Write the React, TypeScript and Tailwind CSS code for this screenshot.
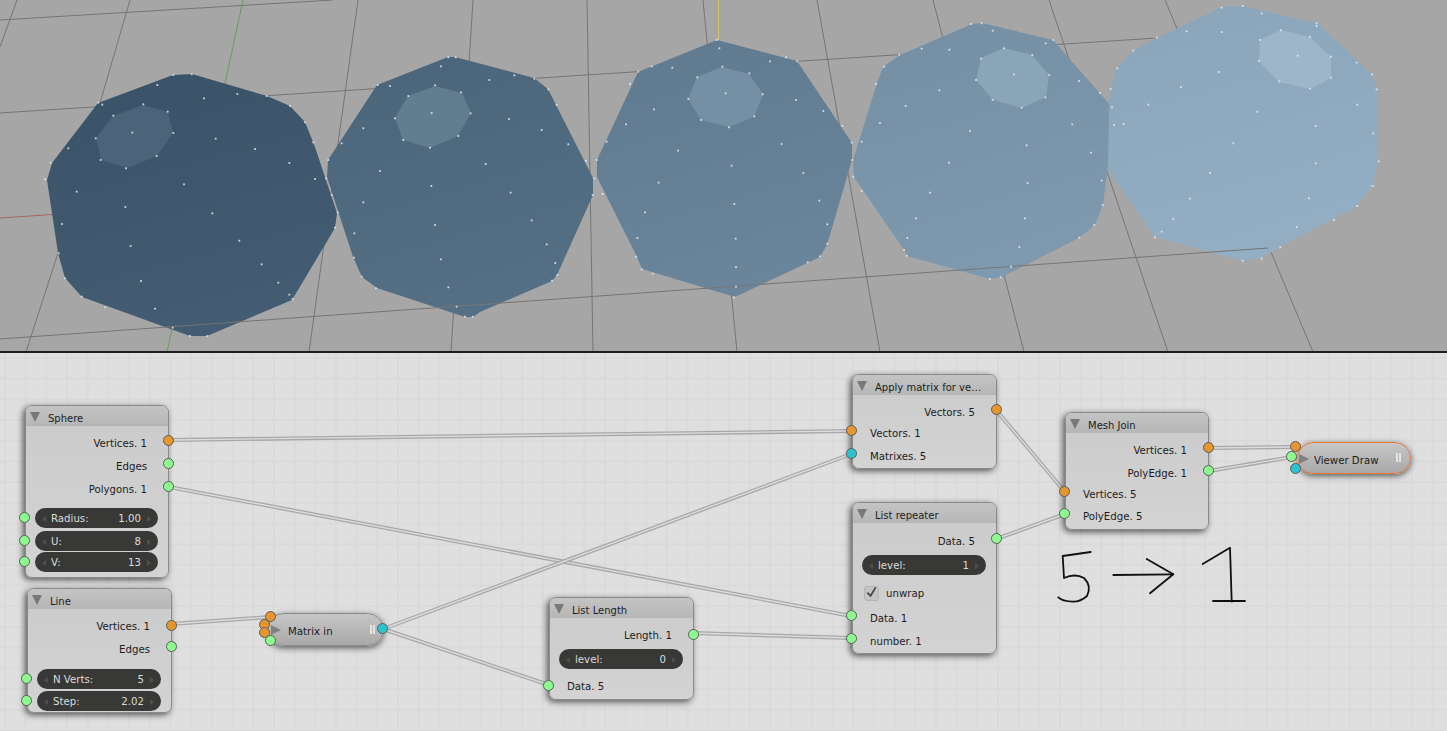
import type { ReactNode } from 'react';

type Pt = [number, number];

// outline + top cap of each sphere, page coordinates
const spheres: { outline: Pt[]; cap: Pt[]; top: string; bottom: string; capColor: string }[] = [
  {
    outline: [[173, 75], [192, 74], [267, 96], [290, 106], [305, 122], [315, 147], [337, 213], [335, 228], [292, 300], [207, 336], [190, 336], [165, 327], [82, 297], [65, 278], [58, 253], [47, 180], [52, 163], [98, 103]],
    cap: [[143, 105], [168, 112], [173, 133], [157, 156], [127, 168], [101, 160], [96, 138], [113, 116]],
    top: '#3a5368', bottom: '#445d72', capColor: '#4b6479',
  },
  {
    outline: [[448, 57], [455, 57], [534, 78], [548, 89], [593, 178], [593, 195], [557, 275], [552, 281], [480, 312], [473, 317], [465, 317], [377, 288], [362, 277], [353, 257], [327, 177], [328, 160], [377, 85]],
    cap: [[435, 86], [462, 93], [471, 113], [458, 136], [430, 148], [403, 140], [395, 118], [408, 96]],
    top: '#4b667b', bottom: '#557085', capColor: '#627c90',
  },
  {
    outline: [[717, 40], [797, 61], [852, 143], [852, 160], [827, 245], [820, 257], [735, 297], [642, 269], [637, 257], [597, 177], [597, 160], [638, 72]],
    cap: [[722, 67], [749, 74], [763, 94], [754, 117], [729, 127], [701, 120], [688, 99], [697, 77]],
    top: '#607a8f', bottom: '#6b859a', capColor: '#7590a4',
  },
  {
    outline: [[972, 24], [982, 23], [1053, 40], [1112, 107], [1113, 125], [1103, 205], [1095, 225], [1079, 238], [1002, 277], [990, 279], [907, 256], [904, 250], [854, 177], [853, 160], [877, 83], [883, 67], [900, 55]],
    cap: [[1004, 48], [1032, 55], [1049, 75], [1046, 97], [1022, 108], [993, 100], [976, 80], [981, 58]],
    top: '#7590a5', bottom: '#7f9aaf', capColor: '#8aa4b8',
  },
  {
    outline: [[1222, 7], [1243, 6], [1317, 23], [1372, 74], [1377, 89], [1378, 162], [1373, 186], [1357, 206], [1280, 247], [1262, 258], [1243, 261], [1155, 237], [1108, 170], [1109, 107], [1111, 88], [1117, 68], [1133, 51], [1157, 38]],
    cap: [[1281, 30], [1310, 37], [1331, 57], [1331, 78], [1310, 89], [1279, 82], [1259, 61], [1260, 40]],
    top: '#8ba6ba', bottom: '#94afc3', capColor: '#9db6ca',
  },
];

// vertex dots read off 3x crops: [crop x offset, points]
const dotCrops: [number, Pt[]][] = [
  [0, [[520, 225], [575, 223], [472, 255], [612, 295], [712, 282], [800, 288], [870, 318], [915, 367], [940, 427], [945, 537], [868, 489], [765, 447], [647, 416], [552, 553], [230, 575], [376, 621], [637, 640], [186, 672], [392, 738], [718, 722], [176, 760], [785, 793], [835, 848], [195, 835], [423, 843], [245, 890], [868, 884], [878, 897], [316, 922], [465, 926], [518, 983], [570, 1008], [622, 1008], [307, 314], [295, 308], [205, 445], [152, 488], [135, 538], [430, 313], [503, 335], [340, 347], [397, 398], [520, 399], [287, 415], [302, 480], [378, 505], [470, 468], [985, 480], [978, 535], [995, 585], [1013, 637], [1005, 683],
    [1345, 172], [1367, 172], [1323, 199], [1133, 255], [1170, 258], [1305, 256], [1383, 277], [1225, 288], [1295, 339], [1185, 355], [1412, 340], [1090, 385], [1375, 408], [1210, 420], [1025, 430], [1290, 443], [1140, 513], [1294, 558], [1090, 607], [1305, 675], [1063, 700], [1062, 773], [1323, 778], [1085, 830], [1128, 865], [1345, 862], [1370, 920], [1395, 950], [1418, 950]]],
  [480, [[28, 240], [103, 226], [163, 236], [205, 268], [230, 315], [87, 357], [185, 390], [265, 433], [17, 492], [318, 482], [343, 535], [92, 578], [338, 585], [155, 661], [200, 733], [226, 789], [232, 825], [216, 842],
    [710, 120], [718, 145], [870, 184], [918, 172], [952, 184], [515, 199], [577, 203], [475, 215], [727, 200], [652, 232], [808, 220], [450, 252], [737, 280], [848, 283], [625, 297], [948, 300], [522, 328], [1030, 333], [823, 349], [663, 360], [747, 382], [438, 373], [1087, 378], [380, 425], [905, 432], [1115, 428], [594, 452], [755, 497], [350, 480], [1117, 480], [970, 519], [536, 548], [368, 582], [1018, 602], [763, 612], [495, 637], [1042, 673], [472, 714], [767, 716], [1042, 731], [468, 770], [1020, 769], [983, 787], [768, 801], [485, 808], [518, 821], [768, 860], [762, 892],
    [1258, 164], [1325, 146], [1408, 149], [1212, 200], [1188, 252], [1378, 271], [1277, 318], [1200, 369], [1145, 425], [1407, 488], [1120, 530], [1145, 573], [1350, 578], [1308, 655], [1282, 714], [1272, 750], [1280, 767]]],
  [960, [[33, 72], [65, 70], [98, 92], [280, 120], [257, 130], [132, 145], [217, 165], [63, 176], [162, 223], [268, 225], [48, 240], [357, 243], [420, 279], [256, 292], [98, 300], [185, 323], [456, 322], [462, 375], [337, 373], [30, 393], [200, 436], [393, 458], [203, 549], [425, 542], [428, 615], [195, 655], [403, 675], [358, 713], [178, 741], [153, 800], [122, 832], [90, 837],
    [785, 23], [848, 18], [905, 40], [1070, 70], [1070, 78], [680, 94], [785, 96], [963, 91], [1050, 110], [900, 120], [520, 152], [590, 113], [1113, 170], [1013, 167], [897, 183], [1190, 188], [472, 205], [777, 216], [1236, 223], [1113, 233], [958, 244], [663, 261], [1050, 266], [452, 267], [1250, 268], [565, 314], [1192, 314], [491, 372], [892, 335], [1067, 378], [1240, 400], [820, 430], [1067, 490], [1256, 484], [750, 519], [1238, 558], [690, 596], [1047, 595], [1192, 618], [640, 657], [1122, 660], [1010, 681], [605, 695], [585, 712], [961, 742], [905, 776], [848, 782]]],
];

const floorLines: [number, number, number, number][] = [
  [0, 20, 333, 0],
  [0, 113, 1157, 38],
  [17, 0, 0, 47],
  [26, 352, 58, 253],
  [130, 0, 100, 103],
  [358, 0, 309, 352],
  [473, 0, 451, 352],
  [587, 0, 593, 352],
  [703, 0, 737, 352],
  [817, 0, 880, 352],
  [933, 0, 1024, 352],
  [1049, 0, 1168, 352],
  [1165, 0, 1313, 352],
];

const wires: [number, number, number, number][] = [
  [169, 440, 851, 431],
  [169, 487, 851, 616],
  [693, 633, 851, 638],
  [171, 624, 270, 617],
  [383, 629, 851, 454],
  [383, 629, 549, 685],
  [996, 410, 1065, 492],
  [996, 539, 1065, 514],
  [1209, 448, 1296, 447],
  [1209, 471, 1292, 457],
];

const toPoints = (pts: Pt[]) => pts.map((p) => p.join(',')).join(' ');

function Viewport() {
  return (
    <div className="h-[353px] shrink-0 border-b-2 border-[#1c1c1c] bg-[#a6a6a6]">
      <svg viewBox="0 0 1447 351" className="block h-[351px] w-[1447px]">
        <defs>
          {spheres.map((s, i) => (
            <linearGradient key={i} id={`shade${i}`} x1="0.3" y1="0" x2="0.6" y2="1">
              <stop offset="0" stopColor={s.top} />
              <stop offset="1" stopColor={s.bottom} />
            </linearGradient>
          ))}
        </defs>
        {floorLines.map(([x1, y1, x2, y2], i) => (
          <line key={i} x1={x1} y1={y1} x2={x2} y2={y2} stroke="#757575" strokeWidth="1" />
        ))}
        <line x1="0" y1="218" x2="60" y2="214" stroke="#a3675f" strokeWidth="1" />
        <line x1="243" y1="0" x2="167" y2="352" stroke="#6b9a5c" strokeWidth="1" />
        <line x1="718.5" y1="0" x2="718.5" y2="40" stroke="#d4c468" strokeWidth="1" />
        {spheres.map((s, i) => (
          <g key={i}>
            <polygon points={toPoints(s.outline)} fill={`url(#shade${i})`} />
            <polygon points={toPoints(s.cap)} fill={s.capColor} />
          </g>
        ))}
        <line x1="0" y1="339" x2="1268" y2="248" stroke="#757575" strokeWidth="1" />
        {dotCrops.map(([ox, pts]) =>
          pts.map(([x, y], i) => (
            <rect key={`${ox}-${i}`} x={ox + x / 3 - 0.9} y={y / 3 - 0.9} width="1.8" height="1.8" fill="#e2eefa" fillOpacity="0.85" />
          )),
        )}
      </svg>
    </div>
  );
}

type SocketColor = 'orange' | 'green' | 'cyan';

function Socket({ color, className }: { color: SocketColor; className: string }) {
  const fill = color === 'orange' ? 'bg-[#e6962e]' : color === 'green' ? 'bg-[#8dfb8d]' : 'bg-[#2cc4cc]';
  return <span className={`absolute z-10 size-[11px] rounded-full border border-[#5c5c5c] ${fill} ${className}`} />;
}

function Row({ label, color, side, className, socketTop = 'top-[5px]' }: { label: string; color: SocketColor; side: 'in' | 'out'; className?: string; socketTop?: string }) {
  return (
    <div className={`relative flex h-[23px] items-center ${side === 'out' ? 'justify-end pr-[21px]' : 'pl-[17px]'} ${className ?? ''}`}>
      <span className="pt-[5px]">{label}</span>
      <Socket color={color} className={`${socketTop} ${side === 'out' ? '-right-[6px]' : '-left-[7px]'}`} />
    </div>
  );
}

function Field({ label, value, socket, className }: { label: string; value: string; socket?: boolean; className?: string }) {
  return (
    <div className={`relative h-[20px] ${className ?? ''}`}>
      {socket && <Socket color="green" className="top-[4px] -left-[7px]" />}
      <div className="ml-[9px] mr-[10px] flex h-full items-center justify-between rounded-full bg-[#383836] pl-[16px] pr-[17px] pt-[3px] text-[#dcdcdc]">
        <svg viewBox="0 0 4 6" className="absolute left-[16px] top-[8px] h-[6px] w-[4px]"><polygon points="4,0 0,3 4,6" fill="#4f4f4d" /></svg>
        <span>{label}</span>
        <span>{value}</span>
        <svg viewBox="0 0 4 6" className="absolute right-[17px] top-[8px] h-[6px] w-[4px]"><polygon points="0,0 4,3 0,6" fill="#4f4f4d" /></svg>
      </div>
    </div>
  );
}

function Node({ title, className, children }: { title: string; className: string; children: ReactNode }) {
  return (
    <div className={`absolute z-10 rounded-[7px] border border-[#8a8a8a] bg-gradient-to-b from-[#cbcbcb] to-[#d3d3d3] shadow-[-2px_2px_6px_rgba(0,0,0,0.62)] ${className}`}>
      <div className="flex h-[20px] items-center gap-[8px] rounded-t-[6px] bg-gradient-to-b from-[#c4c4c4] to-[#b6b6b6] pl-[4px]">
        <svg viewBox="0 0 10 10" className="mt-[1px] size-[10px]"><polygon points="0,0 10,0 5,10" fill="#787878" /></svg>
        <span className="truncate pt-[5px] text-[10px]">{title}</span>
      </div>
      {children}
    </div>
  );
}

function CollapsedNode({ title, outlined, className, pauseClass, textClass }: { title: string; outlined?: boolean; className: string; pauseClass: string; textClass: string }) {
  return (
    <div className={`absolute z-10 flex items-center rounded-full bg-gradient-to-b from-[#c6c6c6] to-[#a9a9a9] shadow-[0_2px_6px_rgba(0,0,0,0.6)] ${outlined ? 'border border-[#e8763a] pl-[1px]' : 'border border-[#8a8a8a] pl-[3px]'} ${className}`}>
      <svg viewBox="0 0 10 10" className="mt-[1px] size-[10px]"><polygon points="0,0 10,5 0,10" fill="#808080" /></svg>
      <span className={`pt-[5px] ${textClass}`}>{title}</span>
      <span className={`absolute flex gap-[1px] ${pauseClass}`}>
        <span className="h-[9px] w-[2px] bg-[#e4e4e4]" />
        <span className="h-[9px] w-[2px] bg-[#e4e4e4]" />
      </span>
    </div>
  );
}

function NodeEditor() {
  return (
    <div className="relative flex-1 overflow-hidden bg-[#dfdfdf] bg-[linear-gradient(to_right,#dadada_2px,transparent_2px),linear-gradient(to_bottom,#dadada_2px,transparent_2px)] bg-[size:20.7px_20.7px] bg-[position:4px_4px]">
      <svg viewBox="0 353 1447 378" className="absolute inset-0 h-[378px] w-[1447px]">
        {wires.map(([x1, y1, x2, y2], i) => (
          <g key={i}>
            <line x1={x1} y1={y1} x2={x2} y2={y2} stroke="#a8a8a8" strokeWidth="4" />
            <line x1={x1} y1={y1} x2={x2} y2={y2} stroke="#dcdcdc" strokeWidth="1.4" />
          </g>
        ))}
        {/* handwritten note */}
        <g fill="none" stroke="#101010" strokeWidth="1.8" strokeLinejoin="round" strokeLinecap="round">
          <path d="M1090.7 552 L1062.7 556 L1064 578 Q1075 573 1084 578 Q1092 586 1087 596 Q1080 602 1073 601.7 Q1062 601 1058.3 597.3" />
          <path d="M1113.3 575 L1173.3 574.3" />
          <path d="M1146.7 559 L1173.3 574.3 L1150 593.3" />
          <path d="M1202.7 564 L1230 547.7 L1231.7 601.7" />
          <path d="M1213 601 L1245 601" />
        </g>
      </svg>

      <Node title="Sphere" className="left-[25px] top-[52px] h-[173px] w-[144px]">
        <div className="pt-[4px]">
          <Row label="Vertices. 1" color="orange" side="out" />
          <Row label="Edges" color="green" side="out" />
          <Row label="Polygons. 1" color="green" side="out" />
        </div>
        <Field label="Radius:" value="1.00" socket className="mt-[9px]" />
        <Field label="U:" value="8" socket className="mt-[3px]" />
        <Field label="V:" value="13" socket className="mt-[1px]" />
      </Node>

      <Node title="Line" className="left-[27px] top-[235px] h-[125px] w-[145px]">
        <div className="pt-[4px]">
          <Row label="Vertices. 1" color="orange" side="out" socketTop="top-[7px]" />
          <Row label="Edges" color="green" side="out" className="h-[20px]" />
        </div>
        <Field label="N Verts:" value="5" socket className="mt-[10px]" />
        <Field label="Step:" value="2.02" socket className="mt-[2px]" />
      </Node>

      <CollapsedNode title="Matrix in" textClass="pl-[7px]" className="left-[267px] top-[260px] h-[33px] w-[117px]" pauseClass="right-[8px] top-[11px]" />
      <Socket color="orange" className="left-[265px] top-[258px]" />
      <Socket color="orange" className="left-[259px] top-[266px]" />
      <Socket color="orange" className="left-[259px] top-[274px]" />
      <Socket color="green" className="left-[265px] top-[282px]" />
      <Socket color="cyan" className="left-[377px] top-[270px]" />

      <Node title="List Length" className="left-[549px] top-[244px] h-[103px] w-[145px]">
        <Row label="Length. 1" color="green" side="out" className="mt-[4px]" socketTop="top-[7px]" />
        <Field label="level:" value="0" className="mt-[4px]" />
        <Row label="Data. 5" color="green" side="in" className="mt-[4px]" socketTop="top-[7px]" />
      </Node>

      <Node title="Apply matrix for ve…" className="left-[852px] top-[21px] h-[95px] w-[145px]">
        <div className="pt-[4px]">
          <Row label="Vectors. 5" color="orange" side="out" />
          <Row label="Vectors. 1" color="orange" side="in" className="mt-[-2px]" />
          <Row label="Matrixes. 5" color="cyan" side="in" />
        </div>
      </Node>

      <Node title="List repeater" className="left-[852px] top-[149px] h-[152px] w-[145px]">
        <Row label="Data. 5" color="green" side="out" className="mt-[5px]" />
        <Field label="level:" value="1" className="mt-[4px]" />
        <div className="mt-[10px] flex h-[16px] items-center gap-[7px] pl-[11px]">
          <span className="flex size-[15px] items-center justify-center rounded-[3px] border border-[#b4b4b4] bg-[#c4c4c4]">
            <svg viewBox="0 0 14 14" className="size-[14px]"><polyline points="2.5,6.5 6,10 11.5,1" fill="none" stroke="#444" strokeWidth="1.8" /></svg>
          </span>
          <span className="pt-[2px]">unwrap</span>
        </div>
        <Row label="Data. 1" color="green" side="in" className="mt-[4px] h-[22px]" />
        <Row label="number. 1" color="green" side="in" className="h-[22px]" />
      </Node>

      <Node title="Mesh Join" className="left-[1065px] top-[59px] h-[118px] w-[144px]">
        <div className="pt-[4px]">
          <Row label="Vertices. 1" color="orange" side="out" />
          <Row label="PolyEdge. 1" color="green" side="out" />
          <Row label="Vertices. 5" color="orange" side="in" className="mt-[-2px]" />
          <Row label="PolyEdge. 5" color="green" side="in" className="mt-[-1px]" />
        </div>
      </Node>

      <CollapsedNode title="Viewer Draw" outlined textClass="pl-[5px] pt-[6px]" className="left-[1297px] top-[89px] h-[32px] w-[114px]" pauseClass="right-[9px] top-[10px]" />
      <Socket color="orange" className="left-[1290px] top-[88px]" />
      <Socket color="green" className="left-[1286px] top-[98px]" />
      <Socket color="cyan" className="left-[1290px] top-[110px]" />
    </div>
  );
}

export default function App() {
  return (
    <div className="flex h-[731px] w-[1447px] flex-col overflow-hidden font-['DejaVu_Sans',sans-serif] text-[10.2px] leading-none text-[#1c1c1c]">
      <Viewport />
      <NodeEditor />
    </div>
  );
}
